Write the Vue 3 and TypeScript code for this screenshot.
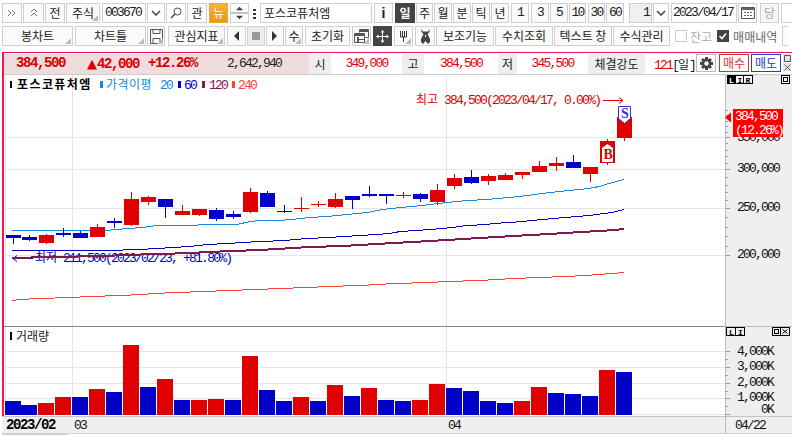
<template>
  <div class="screen">
    <div class="toolbar">
      <template v-for="(b, i) in topButtons" :key="i">
        <div class="btn" :class="b.cls" :style="{ width: b.w + 'px', marginLeft: (b.gap ?? 1) + 'px' }">
          <svg v-if="b.icon === 'dbl-right'" width="10" height="8" viewBox="0 0 10 8"><path d="M1 1l3 3-3 3M5 1l3 3-3 3" fill="none" stroke="#777" /></svg>
          <svg v-else-if="b.icon === 'dbl-up'" width="8" height="10" viewBox="0 0 8 10"><path d="M1 4l3-3 3 3M1 8l3-3 3 3" fill="none" stroke="#777" /></svg>
          <svg v-else-if="b.icon === 'chev'" width="10" height="6" viewBox="0 0 10 6"><path d="M1 1l4 4 4-4" fill="none" stroke="#444" stroke-width="1.5" /></svg>
          <svg v-else-if="b.icon === 'search'" width="12" height="12" viewBox="0 0 12 12"><circle cx="7.500" cy="4.500" r="3.500" fill="none" stroke="#444" /><path d="M5 7l-4 4" stroke="#444" stroke-width="1.4" /></svg>
          <svg v-else-if="b.icon === 'updown'" width="19" height="18" viewBox="0 0 19 18"><path d="M0 8h19v2H0z" fill="#bbb" /><path d="M9.500 2l4 4h-8zM9.500 16l4-4h-8z" fill="#444" /></svg>
          <svg v-else-if="b.icon === 'dots'" width="3" height="11" viewBox="0 0 3 11"><path d="M0 1h3v2H0zM0 5h3v2H0zM0 9h3v2H0z" fill="#333" /></svg>
          <svg v-else-if="b.icon === 'calendar'" width="14" height="12" viewBox="0 0 14 12"><path d="M.5.5h13v11H.5z" fill="none" stroke="#555" /><path d="M1 1h12v2H1zM3 5h2v1H3zM6 5h2v1H6zM9 5h2v1H9zM3 8h2v1H3zM6 8h2v1H6zM9 8h2v1H9z" fill="#666" /></svg>
          <span v-else :class="b.textCls">{{ b.text }}</span>
          <i v-if="b.corner" class="corner"></i>
        </div>
      </template>
    </div>

    <div class="toolbar second">
      <template v-for="(b, i) in toolButtons" :key="i">
        <div class="btn" :class="b.cls" :style="{ width: b.w + 'px', marginLeft: (b.gap ?? 1) + 'px' }">
          <svg v-if="b.icon === 'save'" width="13" height="15" viewBox="0 0 13 15"><path d="M.5.5h12v14H.5zM3 .5v4h7v-4M3 14.5v-5h7v5" fill="none" stroke="#555" /></svg>
          <svg v-else-if="b.icon === 'prev'" width="6" height="10" viewBox="0 0 6 10"><path d="M5 0v10L0 5z" fill="#333" /></svg>
          <svg v-else-if="b.icon === 'stop'" width="8" height="8" viewBox="0 0 8 8"><path d="M0 0h8v8H0z" fill="#999" /></svg>
          <svg v-else-if="b.icon === 'next'" width="6" height="10" viewBox="0 0 6 10"><path d="M0 0v10l5-5z" fill="#333" /></svg>
          <svg v-else-if="b.icon === 'windows'" width="15" height="14" viewBox="0 0 15 14"><path d="M5.500 3.500v-3h9v8H11.500" fill="none" stroke="#555" /><path d="M6 1h8v2H6z" fill="#555" /><path d="M.5 4.500h10v9H.5z" fill="#fafafa" stroke="#555" /><path d="M1 5h9v2H1zM3 8h2v5H3zM3 10h7v1H3z" fill="#555" /></svg>
          <svg v-else-if="b.icon === 'move'" width="13" height="13" viewBox="0 0 13 13"><path d="M6.500 1v11M1 6.500h11" stroke="#fff" fill="none" /><path d="M6.500 0l2 2.500h-4zM6.500 13l2-2.500h-4zM0 6.500l2.500-2v4zM13 6.500l-2.500-2v4z" fill="#fff" /></svg>
          <svg v-else-if="b.icon === 'fork'" width="9" height="12" viewBox="0 0 9 12"><path d="M1.500 1v6h6V1M3.500 1v6M5.500 1v6M4.500 7v5" fill="none" stroke="#333" /></svg>
          <svg v-else-if="b.icon === 'tools'" width="11" height="15" viewBox="0 0 11 15"><path d="M1.500 0v3l2 2-2.500 5v3l2 2 2.500-3 2.500 3 2-2v-3L7.500 5l2-2V0L8 2.500H3z" fill="#444" /><path d="M5 6h1v2H5z" fill="#fff" /></svg>
          <span v-else>{{ b.text }}</span>
          <i v-if="b.corner" class="corner"></i>
        </div>
      </template>
      <label class="check off"><i class="box"></i><span>잔고</span></label>
      <label class="check on">
        <i class="box"><svg width="12" height="12" viewBox="0 0 12 12"><path d="M2.500 6l2.500 2.500 4-5" fill="none" stroke="#fff" stroke-width="1.600" /></svg></i>
        <span>매매내역</span>
      </label>
      <div class="btn sliver"></div>
    </div>

    <div class="frame">
      <div class="quote">
        <div class="quote-main">
          <b class="num strong price">384,500</b>
          <b class="num strong change"><span class="tri">▲</span>42,000</b>
          <b class="num strong pct">+12.26%</b>
          <span class="num volume">2,642,940</span>
        </div>
        <span class="label l-open">시</span><span class="num val v-open">349,000</span>
        <span class="label l-high">고</span><span class="num val v-high">384,500</span>
        <span class="label l-low">저</span><span class="num val v-low">345,500</span>
        <span class="label l-power">체결강도</span>
        <span class="power"><span class="num red">121</span><span class="num">[</span>일<span class="num">]</span></span>
        <div class="gear">
          <svg width="13" height="13" viewBox="0 0 13 13"><circle cx="6.500" cy="6.500" r="3.500" fill="none" stroke="#444" stroke-width="2.600" /><path d="M5 0h3v2.500H5zM5 10.500h3V13H5zM0 5h2.500v3H0zM10.500 5H13v3h-2.500zM1 3l2-2 2 2-2 2zM12 3l-2-2-2 2 2 2zM1 10l2 2 2-2-2-2zM12 10l-2 2-2-2 2-2z" fill="#444" /></svg>
        </div>
        <div class="trade buy">매수</div>
        <div class="trade sell">매도</div>
        <div class="mini">
          <i class="mini-box"><svg width="7" height="7" viewBox="0 0 7 7"><path d="M.5.5h6v6h-6z" fill="none" stroke="#555" /></svg></i>
          <i class="mini-box"><svg width="7" height="7" viewBox="0 0 7 7"><path d="M.5.5l6 6M6.500.5l-6 6" fill="none" stroke="#555" /></svg></i>
        </div>
      </div>

      <div class="panes">
        <svg class="chart" width="788" height="360" viewBox="4 75 788 360">
          <!-- grid -->
          <g class="grid">
            <line x1="5.500" x2="5.500" y1="75" y2="415" />
            <line x1="6" x2="725" y1="137.500" y2="137.500" />
            <line x1="6" x2="725" y1="169.500" y2="169.500" />
            <line x1="6" x2="725" y1="208.500" y2="208.500" />
            <line x1="6" x2="725" y1="255.500" y2="255.500" />
            <line x1="72.500" x2="72.500" y1="75" y2="326" />
            <line x1="446.500" x2="446.500" y1="75" y2="326" />
            <line x1="72.500" x2="72.500" y1="327" y2="415" />
            <line x1="446.500" x2="446.500" y1="327" y2="415" />
            <line x1="6" x2="725" y1="351.500" y2="351.500" />
            <line x1="6" x2="725" y1="367.500" y2="367.500" />
            <line x1="6" x2="725" y1="383.500" y2="383.500" />
            <line x1="6" x2="725" y1="398.500" y2="398.500" />
            <line x1="6" x2="725" y1="414.500" y2="414.500" />
          </g>

          <!-- low note sits under the averages -->
          <path d="M14 258.500h19M17 255.500l-4 3 4 3" fill="none" stroke="#0000c8" />
          <text x="35" y="262" class="note" fill="#0000c8"><tspan class="kr">최저</tspan><tspan> 211,500(2023/02/23, +81.80%)</tspan></text>

          <!-- averages -->
          <polyline :points="ma240" class="ma" stroke="#ff4040" stroke-width="1" />
          <polyline :points="ma120" class="ma" stroke="#7b1c50" stroke-width="2" />
          <polyline :points="ma60" class="ma" stroke="#0000c8" stroke-width="1" />
          <polyline :points="ma20" class="ma" stroke="#1a86dc" stroke-width="1" />

          <!-- candles -->
          <g v-for="(c, i) in candles" :key="i" :fill="c.up ? red : blue">
            <rect :x="barLeft(i) + 8" :y="c.hi" width="1" :height="c.lo - c.hi" />
            <rect :x="barLeft(i) + 1" :y="c.top" width="15" :height="c.bot - c.top" />
          </g>

          <!-- buy / sell markers -->
          <path d="M602 148l5.500-4 5.500 4v14h-11z" fill="#fff" />
          <text x="603.500" y="159" class="marker" fill="#e00000">B</text>
          <path d="M618.500 106.500h12v12l-6 5-6-5z" fill="#fff" stroke="#3232d2" />
          <text x="621" y="118" class="marker" fill="#3232d2">S</text>

          <!-- high note -->
          <text x="416" y="104" class="note" fill="#e00000"><tspan class="kr">최고</tspan><tspan> 384,500(2023/04/17, 0.00%)</tspan></text>
          <path d="M603 100.500h19M619 97.500l4 3-4 3" fill="none" stroke="#e00000" />

          <!-- legend -->
          <rect x="10" y="81" width="2" height="7" fill="#000" />
          <text x="17" y="89" class="legend-name">포스코퓨처엠</text>
          <rect x="100" y="81" width="3" height="7" fill="#1a86dc" />
          <text x="106" y="89" class="legend kr" fill="#1a86dc">가격이평</text>
          <text x="160" y="89" class="legend" fill="#1a86dc">20</text>
          <rect x="178" y="81" width="3" height="7" fill="#0000c8" />
          <text x="184" y="89" class="legend" fill="#0000c8">60</text>
          <rect x="202" y="81" width="3" height="7" fill="#7b1c50" />
          <text x="209" y="89" class="legend" fill="#7b1c50">120</text>
          <rect x="232" y="81" width="3" height="7" fill="#ff4040" />
          <text x="238" y="89" class="legend" fill="#ff4040">240</text>

          <!-- volume pane -->
          <rect x="10" y="332" width="2" height="8" fill="#000" />
          <text x="16" y="341" class="legend-vol">거래량</text>
          <rect v-for="(v, i) in volumes" :key="'v' + i" :x="barLeft(i)" :y="v.top" width="16" :height="415 - v.top" :fill="v.up ? red : blue" />
          <line x1="4" x2="725" y1="326.500" y2="326.500" stroke="#888" />

          <!-- right axis and time axis -->
          <rect x="725" y="75" width="67" height="358" fill="#efefef" />
          <rect x="2" y="416" width="723" height="17" fill="#efefef" />
          <rect x="2" y="433" width="66" height="2" fill="#ccc" />
          <line x1="2" x2="792" y1="416.500" y2="416.500" stroke="#c4c4c4" />
          <line x1="2" x2="792" y1="433.500" y2="433.500" stroke="#d4d4d4" />
          <line x1="725.500" x2="725.500" y1="75" y2="433" stroke="#bbb" />
          <line x1="725" x2="792" y1="326.500" y2="326.500" stroke="#bbb" />
          <line v-for="t in ticks" :key="'t' + t.y" x1="726" :x2="t.major ? 730 : 728" :y1="t.y + 0.5" :y2="t.y + 0.5" stroke="#999" />
          <text v-for="a in priceLabels" :key="a.text" x="737" :y="a.y" class="axis">{{ a.text }}</text>
          <text v-for="a in volLabels" :key="a.text" :x="a.x" :y="a.y" class="axis">{{ a.text }}</text>

          <!-- pane buttons -->
          <g>
            <rect x="727.500" y="75.500" width="8" height="8" fill="#000" stroke="#000" /><text x="729" y="82.500" class="tiny" fill="#fff">L</text>
            <rect x="735.500" y="75.500" width="8" height="8" fill="#fff" stroke="#000" /><text x="737.500" y="82.500" class="tiny">I</text>
            <rect x="743.500" y="75.500" width="9" height="8" fill="#fff" stroke="#000" /><text x="745.500" y="82.500" class="tiny">R</text>
            <rect x="781.500" y="75.500" width="8" height="8" fill="#fff" stroke="#000" /><rect x="783.500" y="77.500" width="4" height="4" fill="none" stroke="#000" />
            <rect x="726.500" y="327.500" width="9" height="8" fill="#efefef" stroke="#000" /><text x="729" y="334.500" class="tiny">L</text>
            <rect x="735.500" y="327.500" width="9" height="8" fill="#efefef" stroke="#000" /><text x="738" y="334.500" class="tiny">I</text>
            <rect x="772.500" y="327.500" width="8" height="8" fill="#efefef" stroke="#000" /><rect x="774.500" y="329.500" width="4" height="4" fill="none" stroke="#000" />
            <rect x="780.500" y="327.500" width="9" height="8" fill="#efefef" stroke="#000" /><path d="M782.500 329.500l5 4M787.500 329.500l-5 4" stroke="#000" />
          </g>

          <!-- current price tag -->
          <path d="M725 117.500l6-5v10z" fill="#ff0000" />
          <rect x="733" y="109" width="50" height="28" fill="#ff0000" />
          <text x="735" y="120" class="axis tag">384,500</text>
          <text x="735" y="134" class="axis tag">(12.26%)</text>

          <!-- time axis -->
          <text x="6" y="429" class="axis-bold">2023/02</text>
          <text x="74" y="429" class="axis">03</text>
          <text x="448" y="429" class="axis">04</text>
          <text x="735" y="429" class="axis">04/22</text>
        </svg>
      </div>
    </div>
  </div>
</template>

<script setup lang="ts">
interface Btn {
  w: number;
  text?: string;
  icon?: string;
  cls?: string;
  textCls?: string;
  corner?: boolean;
  gap?: number;
}
interface Candle {
  up: boolean;
  top: number;
  bot: number;
  hi: number;
  lo: number;
}

const red = '#e00000';
const blue = '#0000c8';

const topButtons: Btn[] = [
  { w: 20, icon: 'dbl-right', gap: 2 },
  { w: 21, icon: 'dbl-up' },
  { w: 20, text: '전' },
  { w: 34, text: '주식', corner: true },
  { w: 44, text: '003670', cls: 'field mid', textCls: 'num', gap: 2 },
  { w: 18, icon: 'chev', cls: 'joined' },
  { w: 20, icon: 'search', cls: 'joined' },
  { w: 20, text: '관' },
  { w: 19, text: '뉴', cls: 'orange', gap: 2 },
  { w: 19, icon: 'updown', cls: 'joined', gap: 2 },
  { w: 9, icon: 'dots', cls: 'plain' },
  { w: 112, text: '포스코퓨처엠', cls: 'field' },
  { w: 19, text: 'i', cls: 'bold', gap: 2 },
  { w: 20, text: '일', cls: 'dark', gap: 2 },
  { w: 17, text: '주' },
  { w: 18, text: '월' },
  { w: 18, text: '분' },
  { w: 18, text: '틱' },
  { w: 18, text: '년' },
  { w: 18, text: '1', textCls: 'num', gap: 2 },
  { w: 18, text: '3', textCls: 'num', gap: 2 },
  { w: 18, text: '5', textCls: 'num' },
  { w: 17, text: '10', textCls: 'num' },
  { w: 17, text: '30', textCls: 'num', gap: 2 },
  { w: 18, text: '60', textCls: 'num' },
  { w: 23, text: '1', cls: 'stepper', textCls: 'num', gap: 5 },
  { w: 16, icon: 'chev', cls: 'joined' },
  { w: 66, text: '2023/04/17', cls: 'field tight', textCls: 'num', gap: 2 },
  { w: 19, icon: 'calendar', cls: 'joined' },
  { w: 19, text: '당', cls: 'muted', gap: 3 },
  { w: 20, cls: 'field', gap: 2 },
];

const toolButtons: Btn[] = [
  { w: 71, text: '봉차트', corner: true, gap: 2 },
  { w: 71, text: '차트틀', corner: true, gap: 2 },
  { w: 18, icon: 'save', corner: true },
  { w: 57, text: '관심지표', corner: true, gap: 3 },
  { w: 19, icon: 'prev', gap: 2 },
  { w: 18, icon: 'stop', cls: 'gray', gap: 1 },
  { w: 18, icon: 'next' },
  { w: 18, text: '수', corner: true, gap: 1 },
  { w: 45, text: '초기화', gap: 2 },
  { w: 19, icon: 'windows', corner: true, gap: 2 },
  { w: 19, icon: 'move', cls: 'dark', gap: 2 },
  { w: 19, icon: 'fork', corner: true, gap: 2 },
  { w: 20, icon: 'tools', gap: 2 },
  { w: 58, text: '보조기능' },
  { w: 58, text: '수치조회', gap: 1 },
  { w: 58, text: '텍스트 창', gap: 1 },
  { w: 57, text: '수식관리', gap: 1 },
];

// up, body top, body bottom, wick high, wick low
const candleRows: [number, number, number, number, number][] = [
  [0, 235, 238, 235, 244], [0, 237, 240, 235, 241], [1, 235, 243, 234, 244], [0, 233, 235, 228, 237],
  [0, 233, 238, 231, 238], [1, 227, 237, 224, 237], [0, 221, 223, 218, 228], [1, 199, 225, 192, 226],
  [1, 197, 202, 196, 205], [0, 199, 207, 199, 218], [1, 211, 215, 205, 215], [1, 209, 215, 209, 216],
  [0, 210, 219, 208, 221], [0, 214, 217, 211, 219], [1, 192, 212, 188, 213], [0, 193, 207, 191, 207],
  [0, 211, 212, 205, 213], [1, 208, 209, 197, 212], [1, 204, 205, 201, 207], [1, 199, 207, 193, 208],
  [0, 196, 200, 196, 209], [0, 194, 196, 186, 197], [0, 194, 196, 194, 204], [1, 195, 196, 192, 198],
  [0, 194, 199, 193, 202], [1, 190, 202, 184, 205], [1, 178, 186, 174, 189], [0, 177, 183, 170, 184],
  [1, 176, 181, 174, 185], [1, 175, 180, 173, 180], [1, 172, 175, 172, 179], [1, 166, 172, 161, 172],
  [1, 163, 166, 157, 171], [0, 162, 168, 155, 168], [1, 167, 174, 167, 182], [1, 141, 163, 139, 165],
  [1, 117, 138, 117, 141],
];

const candles: Candle[] = candleRows.map(([up, top, bot, hi, lo]) => ({ up: up === 1, top, bot, hi, lo }));

const volumeRows: [number, number][] = [
  [0, 401], [0, 405], [1, 403], [1, 397], [0, 397], [1, 389], [0, 392], [1, 345], [0, 387], [1, 379],
  [0, 400], [1, 400], [1, 399], [0, 400], [1, 356], [0, 390], [0, 401], [1, 397], [0, 401], [1, 385],
  [0, 396], [1, 388], [0, 400], [0, 401], [1, 400], [1, 384], [0, 388], [0, 391], [0, 401], [0, 403],
  [1, 401], [1, 387], [0, 393], [0, 394], [0, 396], [1, 370], [0, 372],
];
const volumes = volumeRows.map(([up, top]) => ({ up: up === 1, top }));

const barLeft = (i: number) => Math.floor(5 + i * 16.98);

const toPoints = (rows: [number, number][], offset: number) =>
  rows.map(([x, y]) => `${x},${y + offset}`).join(' ');

const ma20 = toPoints([
  [12, 230], [106, 230], [127, 228], [143, 227], [157, 225], [190, 225], [207, 224], [237, 224], [250, 221],
  [260, 220], [277, 220], [293, 219], [300, 218], [310, 217], [327, 216], [347, 214], [367, 212], [383, 209],
  [400, 207], [413, 206], [430, 204], [447, 202], [467, 200], [487, 199], [497, 198], [510, 197], [527, 195],
  [542, 193], [559, 191], [589, 188], [599, 186], [609, 183], [624, 179],
], 0.5);
const ma60 = toPoints([
  [12, 250], [106, 250], [140, 249], [157, 248], [173, 247], [190, 246], [208, 244], [227, 243], [243, 242],
  [260, 241], [287, 240], [293, 239], [310, 238], [327, 237], [345, 236], [360, 235], [377, 234], [390, 233],
  [400, 231], [417, 230], [430, 229], [442, 228], [452, 227], [467, 225], [487, 224], [493, 223], [510, 222],
  [522, 221], [542, 219], [565, 217], [589, 215], [612, 212], [624, 209],
], 0.5);
const ma120 = toPoints([
  [12, 258], [50, 257], [107, 256], [123, 255], [160, 254], [190, 253], [208, 252], [233, 251], [260, 250],
  [277, 249], [293, 248], [310, 247], [343, 246], [360, 245], [377, 244], [393, 243], [413, 242], [430, 241],
  [447, 240], [463, 239], [480, 238], [497, 237], [513, 236], [532, 235], [549, 234], [565, 233], [582, 232],
  [599, 231], [615, 230], [624, 229],
], 0);
const ma240 = toPoints([
  [12, 300], [21, 299], [38, 298], [72, 297], [88, 296], [123, 295], [140, 294], [157, 293], [173, 292],
  [208, 291], [225, 290], [260, 289], [277, 288], [310, 287], [327, 286], [360, 285], [378, 284], [395, 283],
  [430, 282], [447, 281], [480, 280], [497, 279], [513, 278], [540, 277], [565, 276], [585, 275], [599, 274],
  [624, 272],
], 0.5);

const priceLabels = [
  { text: '350,000', y: 141 },
  { text: '300,000', y: 172 },
  { text: '250,000', y: 211 },
  { text: '200,000', y: 258 },
];
const volLabels = [
  { text: '4,000K', x: 737, y: 355 },
  { text: '3,000K', x: 737, y: 370 },
  { text: '2,000K', x: 737, y: 386 },
  { text: '1,000K', x: 737, y: 401 },
  { text: '0K', x: 761, y: 413 },
];

// minor ticks between the log-spaced majors
const majors = [137, 169, 208, 255];
const ticks = [
  ...majors.map((y) => ({ y, major: true })),
  ...majors.slice(0, -1).flatMap((y, i) =>
    [1, 2, 3, 4].map((k) => ({ y: Math.round(y + ((majors[i + 1] - y) * k) / 5), major: false })),
  ),
  ...[110, 115, 121, 126, 132].map((y) => ({ y, major: false })),
  ...[351, 367, 383, 398, 414].map((y) => ({ y, major: true })),
  ...[359, 375, 391, 406].map((y) => ({ y, major: false })),
];
</script>

<style scoped>
.screen {
  width: 792px;
  height: 435px;
  overflow: hidden;
  background: #fff;
  font-family: "Noto Sans CJK KR", "Liberation Sans", sans-serif;
  font-size: 12px;
  color: #222;
  display: flex;
  flex-direction: column;
}

.toolbar {
  display: flex;
  height: 20px;
  margin-top: 3px;
  flex: none;
}

.btn {
  position: relative;
  flex: none;
  display: flex;
  align-items: center;
  justify-content: center;
  height: 20px;
  box-sizing: border-box;
  background: #fafafa;
  border: 1px solid #cfcfcf;
  font-size: 12px;
  line-height: 18px;
  white-space: nowrap;
  overflow: hidden;
}

.btn.field {
  background: #fff;
  justify-content: flex-start;
  padding-left: 3px;
}

.btn.field.mid {
  padding-left: 2px;
}

.btn.field.tight {
  padding-left: 1px;
}

.btn.joined {
  background: #fff;
}

.btn.orange {
  background: linear-gradient(#f8b23c, #ec9512);
  border-color: #e8a63a;
  color: #fff;
}

.btn.gray {
  background: #ededed;
}

.btn.plain {
  background: #fff;
  border-color: transparent;
}

.btn.dark {
  background: #444;
  border-color: #444;
  color: #fff;
  font-weight: 700;
}

.btn.bold {
  font-family: "Liberation Sans", sans-serif;
  font-weight: 700;
  font-size: 14px;
}

.btn.stepper {
  background: #f0f0f0;
  justify-content: flex-end;
  padding-right: 2px;
}

.btn.muted {
  color: #aaa;
  background: #f6f6f6;
}

.btn.sliver {
  width: 6px;
  margin-left: 5px;
  border-right: 0;
}

.corner {
  position: absolute;
  right: 1px;
  bottom: 1px;
  border-style: solid;
  border-width: 0 0 6px 6px;
  border-color: transparent transparent #bbb transparent;
}

.check {
  display: flex;
  align-items: center;
  flex: none;
  gap: 4px;
  font-size: 12px;
  color: #666;
}

.check.off {
  margin-left: 5px;
  gap: 3px;
  color: #aaa;
}

.check.on {
  margin-left: 5px;
}

.box {
  display: block;
  width: 12px;
  height: 12px;
  box-sizing: border-box;
  border: 1px solid #ccc;
  background: #fff;
  overflow: hidden;
}

.check.on .box {
  border-color: #444;
  background: #444;
}

.box svg {
  display: block;
  margin: -1px;
}

.frame {
  margin: 6px 0 0 2px;
  height: 364px;
  box-sizing: border-box;
  border-top: 1px solid #f4145a;
  border-left: 2px solid #f4145a;
  flex: none;
  display: flex;
  flex-direction: column;
}

.quote {
  position: relative;
  height: 21px;
  margin-top: 1px;
  flex: none;
  line-height: 19px;
  border-bottom: 1px solid #ccc;
  box-sizing: border-box;
  display: flex;
}

.num {
  font-family: "Liberation Mono", monospace;
  font-size: 13px;
  letter-spacing: -1.8px;
}

.strong {
  font-weight: 700;
  font-size: 14px;
  letter-spacing: -1.4px;
  color: #d80000;
}

.tri {
  font-family: "DejaVu Sans", sans-serif;
  font-size: 13px;
  letter-spacing: 0;
}

.quote-main {
  width: 305px;
  background: #efdcdc;
  position: relative;
  flex: none;
  height: 20px;
}

.quote-main > * {
  position: absolute;
  top: 0;
}

.price {
  left: 12px;
}

.change {
  left: 83px;
}

.pct {
  left: 144px;
}

.volume {
  left: 223px;
}

.label {
  background: #eee;
  height: 20px;
  text-align: center;
  flex: none;
  font-size: 12px;
}

.val {
  color: #e00000;
  flex: none;
  text-align: center;
}

.l-open {
  width: 22px;
}

.v-open {
  width: 71px;
}

.l-high {
  width: 22px;
}

.v-high {
  width: 74px;
}

.l-low {
  width: 19px;
}

.v-low {
  width: 71px;
}

.l-power {
  width: 57px;
}

.power {
  margin-left: 9px;
  flex: none;
  width: 42px;
}

.red {
  color: #e00000;
}

.gear {
  width: 20px;
  height: 18px;
  box-sizing: border-box;
  border: 1px solid #bbb;
  display: flex;
  align-items: center;
  justify-content: center;
  flex: none;
}

.trade {
  width: 30px;
  height: 18px;
  margin-left: 3px;
  box-sizing: border-box;
  border: 1px solid currentColor;
  text-align: center;
  line-height: 15px;
  flex: none;
}

.buy {
  color: #d83030;
}

.sell {
  margin-left: 2px;
  color: #2040d0;
}

.mini {
  margin-left: 2px;
  display: flex;
  flex-direction: column;
  gap: 1px;
  flex: none;
}

.mini-box {
  display: flex;
  width: 8px;
  height: 8px;
  align-items: center;
  justify-content: center;
  background: #e4e4e4;
}

.panes {
  flex: 1;
  min-height: 0;
}

.chart {
  display: block;
  overflow: visible;
}

.grid line {
  stroke: #e6e6e6;
}

.ma {
  fill: none;
  shape-rendering: crispEdges;
}

.marker {
  font: 700 14px "Liberation Serif", serif;
}

.note,
.axis,
.legend {
  font-family: "Liberation Mono", monospace;
  font-size: 13px;
  letter-spacing: -1.8px;
}

.note .kr,
.legend.kr {
  font-family: "Noto Sans CJK KR", sans-serif;
  letter-spacing: 0;
  font-size: 12px;
}

.legend.kr {
  letter-spacing: 0.5px;
}

.axis {
  fill: #111;
}

.axis.tag {
  fill: #fff;
}

.legend-name {
  font: 700 12px "Noto Sans CJK KR", sans-serif;
  letter-spacing: 1.4px;
}

.legend-vol {
  font: 12px "Noto Sans CJK KR", sans-serif;
  fill: #222;
}

.axis-bold {
  font: 700 14px "Liberation Mono", monospace;
  letter-spacing: -1.4px;
}

.tiny {
  font: 700 8px "Liberation Mono", monospace;
}
</style>
